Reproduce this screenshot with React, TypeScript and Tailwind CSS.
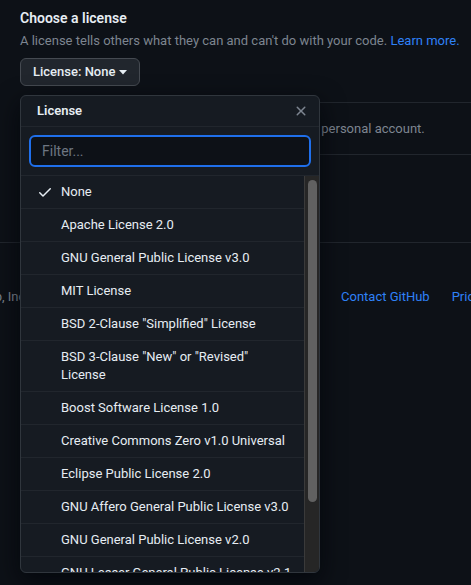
import React from "react";

const items: string[] = [
  "None",
  "Apache License 2.0",
  "GNU General Public License v3.0",
  "MIT License",
  'BSD 2-Clause "Simplified" License',
  "BSD3",
  "Boost Software License 1.0",
  "Creative Commons Zero v1.0 Universal",
  "Eclipse Public License 2.0",
  "GNU Affero General Public License v3.0",
  "GNU General Public License v2.0",
  "GNU Lesser General Public License v2.1",
];

function Check() {
  return (
    <svg width="16" height="16" viewBox="0 0 16 16" fill="#e6edf3">
      <path d="M13.78 4.22a.75.75 0 0 1 0 1.06l-7.25 7.25a.75.75 0 0 1-1.06 0L2.22 9.28a.751.751 0 0 1 .018-1.042.751.751 0 0 1 1.042-.018L6 10.94l6.72-6.72a.75.75 0 0 1 1.06 0Z" />
    </svg>
  );
}

function XIcon() {
  return (
    <svg width="16" height="16" viewBox="0 0 16 16" fill="#7d8590">
      <path d="M3.72 3.72a.75.75 0 0 1 1.06 0L8 6.94l3.22-3.22a.749.749 0 0 1 1.275.326.749.749 0 0 1-.215.734L9.06 8l3.22 3.22a.749.749 0 0 1-.326 1.275.749.749 0 0 1-.734-.215L8 9.06l-3.22 3.220a.751.751 0 0 1-1.042-.018.751.751 0 0 1-.018-1.042L6.94 8 3.72 4.78a.75.75 0 0 1 0-1.06Z" />
    </svg>
  );
}

export default function App() {
  return (
    <div
      className="relative w-[471px] h-[585px] overflow-hidden bg-[#0d1117] text-[#e6edf3]"
      style={{ fontFamily: "Roboto, 'Liberation Sans', sans-serif" }}
    >
      <div className="pl-[20px] pt-[8px]">
        <h2 className="text-[14px] leading-[21px] font-semibold">Choose a license</h2>
        <p className="mt-[3px] text-[13px] leading-[18px] text-[#7d8590] whitespace-nowrap">
          A license tells others what they can and can't do with your code.{" "}
          <span className="text-[#2f81f7]">Learn more.</span>
        </p>
        <button className="mt-[8px] h-[28px] px-[12px] flex items-center gap-[4px] rounded-[6px] border border-[#454a51] bg-[#21262d] text-[13px] font-medium text-[#e6edf3]">
          License: None
          <svg width="8" height="5" viewBox="0 0 8 5" fill="#e6edf3">
            <path d="M0 0h8L4 4.5Z" />
          </svg>
        </button>
      </div>

      <div className="mt-[16px] ml-[20px] h-[53px] border-y border-[#21262d] flex items-center pl-[53px]">
        <span className="text-[13px] text-[#7d8590] whitespace-nowrap">
          You are creating a public repository in your personal account.
        </span>
      </div>

      <div className="mt-[87px] border-t border-[#21262d] pt-[45px] flex items-center text-[13px] leading-[18px] whitespace-nowrap">
        <div className="w-[341px] shrink-0 overflow-hidden">
          <span className="ml-[-38px] text-[#7d8590]">GitHub, Inc.</span>
        </div>
        <span className="text-[#2f81f7]">Contact GitHub</span>
        <span className="ml-[22px] text-[#2f81f7]">Pricing</span>
      </div>

      <div className="absolute left-[20px] top-[95px] w-[300px] h-[478px] flex flex-col rounded-[6px] border border-[#30363d] bg-[#161b22] shadow-[0_8px_24px_rgba(1,4,9,0.75)] overflow-hidden">
        <div className="h-[31px] shrink-0 flex items-center justify-between pl-[16px] pr-[10px] border-b border-[#21262d]">
          <span className="text-[13px] font-semibold">License</span>
          <XIcon />
        </div>
        <div className="shrink-0 p-[8px] border-b border-[#21262d]">
          <div className="h-[32px] rounded-[6px] border-2 border-[#1f6feb] bg-[#0d1117] flex items-center pl-[11px] text-[14px] text-[#6e7681]">
            Filter...
          </div>
        </div>
        <div className="flex flex-1 min-h-0">
          <div className="flex-1 min-w-0 overflow-hidden">
            {items.map((it, i) => (
              <div
                key={i}
                className="flex items-start gap-[8px] pl-[16px] pr-[16px] py-[7px] border-b border-[#21262d] text-[13px] leading-[18px]"
              >
                <div className="w-[16px] h-[18px] shrink-0 flex items-center">{i === 0 ? <Check /> : null}</div>
                {it === "BSD3" ? (
                  <span>
                    BSD 3-Clause "New" or "Revised"
                    <br />
                    License
                  </span>
                ) : (
                  <span className="whitespace-nowrap">{it}</span>
                )}
              </div>
            ))}
          </div>
          <div className="w-[15px] shrink-0 bg-[#262626] border-l border-[#3a3a3a] pt-[4px] flex justify-center">
            <div className="w-[9px] h-[322px] rounded-full bg-[#616161]" />
          </div>
        </div>
      </div>
    </div>
  );
}
